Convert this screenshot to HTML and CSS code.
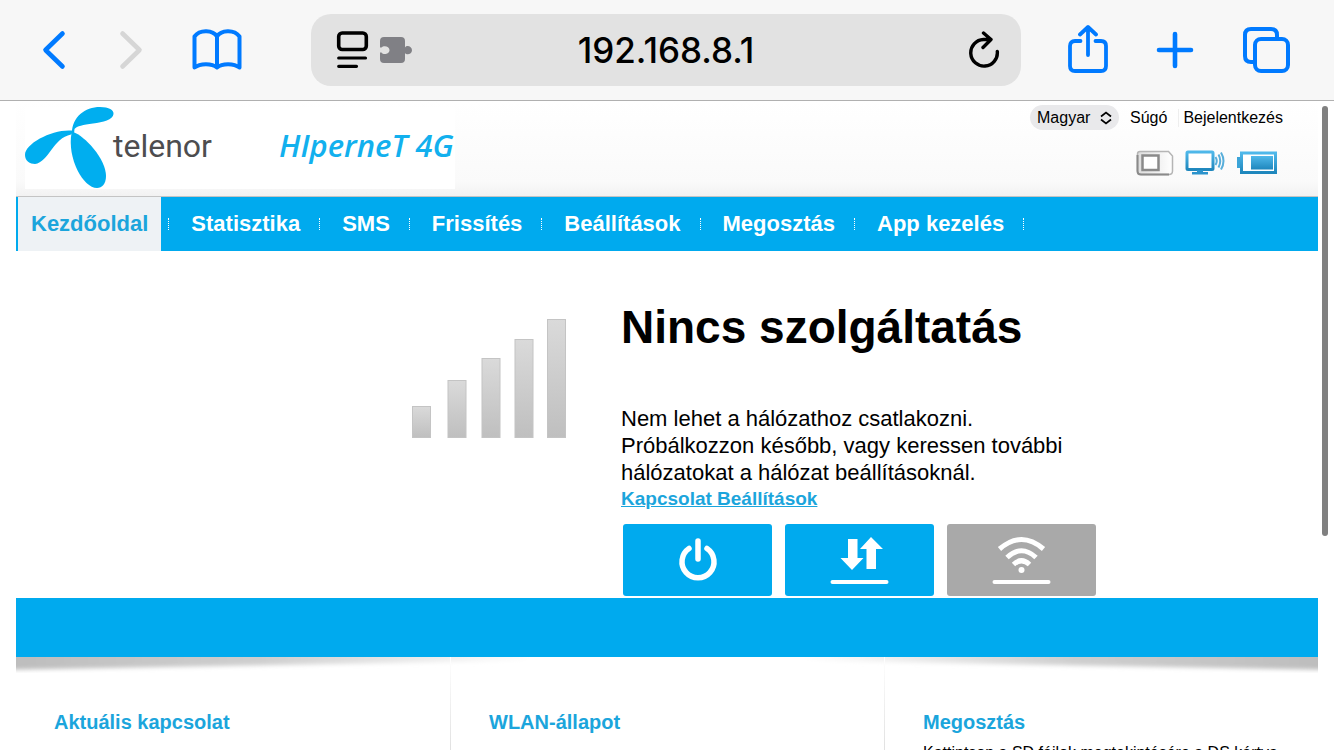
FILE: index.html
```html
<!DOCTYPE html>
<html lang="hu">
<head>
  <meta charset="UTF-8">
  <meta name="viewport" content="width=device-width, initial-scale=1">
  <title>Hipernet 4G</title>
  <link rel="stylesheet" href="styles.css">
</head>
<body>
  <div class="toolbar">
    <div class="tools tools-left">
      <button class="tool" aria-label="Vissza">
        <svg width="24" height="40" viewBox="0 0 24 40"><path d="M20.500 3.500 3.500 20 20.500 36.500" fill="none" stroke="#007aff" stroke-width="4.600" stroke-linecap="round" stroke-linejoin="round"/></svg>
      </button>
      <button class="tool" aria-label="Előre" disabled>
        <svg width="24" height="40" viewBox="0 0 24 40"><path d="M3.500 3.500 20.500 20 3.500 36.500" fill="none" stroke="#d6d6d6" stroke-width="4.600" stroke-linecap="round" stroke-linejoin="round"/></svg>
      </button>
      <button class="tool" aria-label="Könyvjelzők">
        <svg width="50" height="42" viewBox="0 0 50 42"><path d="M25 7.500C21 1 8 0 2.500 7.500V38.500C8 34 20 34 25 38.500C30 34 42 34 47.500 38.500V7.500C42 0 29 1 25 7.500V38.500" fill="none" stroke="#007aff" stroke-width="4" stroke-linecap="round" stroke-linejoin="round"/></svg>
      </button>
    </div>
    <div class="address">
      <button class="tool page-menu" aria-label="Oldalmenü">
        <svg width="76" height="38" viewBox="0 0 76 38">
          <rect x="2.700" y="2" width="27.600" height="16.500" rx="3.500" fill="none" stroke="#000" stroke-width="3.600"/>
          <path d="M2.700 27H29.500M2.700 35.300H20.500" stroke="#000" stroke-width="3.200" stroke-linecap="round"/>
          <path d="M48 6h17a4 4 0 0 1 4 4v6.500c2-3 7-1 7 2.700s-5 5.700-7 2.700V28a4 4 0 0 1-4 4H48a4 4 0 0 1-4-4v-6.500h1.500c2 3 8 1.500 8-2.500s-6-5-8-2.500H44V10a4 4 0 0 1 4-4z" fill="#808085"/>
        </svg>
      </button>
      <span class="url">192.168.8.1</span>
      <button class="tool" aria-label="Frissítés">
        <svg width="32" height="38" viewBox="0 0 32 38"><path d="M14.500 8.500A13.300 13.300 0 1 0 28.300 20.500M14.500 2 22 8.500 14 16.500M22 8.500H14.500" fill="none" stroke="#000" stroke-width="3.400" stroke-linecap="round" stroke-linejoin="round"/></svg>
      </button>
    </div>
    <div class="tools tools-right">
      <button class="tool" aria-label="Megosztás">
        <svg width="40" height="50" viewBox="0 0 40 50"><path d="M12.500 16H7Q2 16 2 21V41Q2 46 7 46H33Q38 46 38 41V21Q38 16 33 16H27.500M20 30V2.500M12 9.500 20 2 28 9.500" fill="none" stroke="#007aff" stroke-width="3.800" stroke-linecap="round" stroke-linejoin="round"/></svg>
      </button>
      <button class="tool" aria-label="Új lap">
        <svg width="38" height="38" viewBox="0 0 38 38"><path d="M19 3V35M3 19H35" stroke="#007aff" stroke-width="4.600" stroke-linecap="round"/></svg>
      </button>
      <button class="tool" aria-label="Lapok">
        <svg width="48" height="48" viewBox="0 0 48 48"><path d="M11 36H9Q3 36 3 30V9Q3 3 9 3H29Q35 3 35 9V12" fill="none" stroke="#007aff" stroke-width="4"/><rect x="13" y="13" width="33" height="32" rx="6" fill="none" stroke="#007aff" stroke-width="4"/></svg>
      </button>
    </div>
  </div>

  <div class="page">
    <header class="header">
      <a class="brand" href="#" aria-label="Telenor Hipernet 4G">
        <svg width="430" height="82" viewBox="0 0 430 82">
          <g fill="#00aeef">
            <path d="M47 26C47 10 60 0 75 0C84 0 89 3 88.500 7C88 13 78 15 68 16.500C58 18 52 19 49.500 22L49 27Z"/>
            <path d="M49 24C30 21 0 36 0 48C0 54 5 57 10 57C24 55 28 31 46 27.500Z"/>
            <path d="M48 25C60 29 81 52 81 69C81 77 77 81 72 81C58 81 42 51 46.500 26Z"/>
          </g>
          <text class="logo-telenor" x="88" y="50">telenor</text>
          <text class="logo-hipernet" x="254" y="50">HIperneT 4G</text>
        </svg>
      </a>
      <div class="header-side">
        <div class="top-links">
          <span class="lang">
            <select aria-label="Nyelv"><option>Magyar</option><option>English</option></select>
            <svg width="12" height="14" viewBox="0 0 12 14"><path d="M1 5.500 6 1.500 11 5.500M1 8.500 6 12.500 11 8.500" fill="none" stroke="#000" stroke-width="1.700"/></svg>
          </span>
          <a href="#">Súgó</a>
          <a class="login" href="#">Bejelentkezés</a>
        </div>
        <div class="status">
          <svg width="38" height="26" viewBox="0 0 38 26">
            <defs>
              <linearGradient id="sim" x1="0" y1="0" x2="1" y2="0"><stop offset="0" stop-color="#ddd"/><stop offset="1" stop-color="#fff"/></linearGradient>
            </defs>
            <path d="M4 1.500H32.500L36.500 6V21Q36.500 24.500 33 24.500H5Q1.500 24.500 1.500 21V4Q1.500 1.500 4 1.500Z" fill="url(#sim)" stroke="#b5b5b5" stroke-width="1.500"/>
            <path d="M1.500 5V21Q1.500 24.500 5 24.500H33" fill="none" stroke="#8a8a8a" stroke-width="2"/>
            <rect x="6.500" y="5.500" width="16" height="14.500" fill="#fff" stroke="#8a8a8a" stroke-width="2.500"/>
          </svg>
          <svg width="40" height="26" viewBox="0 0 40 26">
            <defs>
              <linearGradient id="blue" x1="0" y1="0" x2="0" y2="1"><stop offset="0" stop-color="#4fb8ea"/><stop offset="1" stop-color="#1f87bd"/></linearGradient>
            </defs>
            <rect x="2" y="2" width="26" height="17.500" rx="1" fill="#fff" stroke="url(#blue)" stroke-width="3"/>
            <path d="M12 20h6v2h5v2.500H7V22h5z" fill="#2b93cc"/>
            <path d="M30.500 7Q33 11 30.500 15M33.500 4.500Q37 11 33.500 17.500M36 2.500Q41 11 36 19.500" fill="none" stroke="#58aeda" stroke-width="2"/>
          </svg>
          <svg width="42" height="24" viewBox="0 0 42 24">
            <path d="M1 6h5v11H1z" fill="#3ba4d8"/>
            <rect x="5.500" y="2" width="34" height="19.500" fill="#fff" stroke="url(#blue)" stroke-width="3"/>
            <rect x="15" y="5" width="22" height="13.500" fill="url(#blue)"/>
          </svg>
        </div>
      </div>
    </header>

    <nav class="menu">
      <a class="active" href="#">Kezdőoldal</a>
      <a href="#">Statisztika</a>
      <a href="#">SMS</a>
      <a href="#">Frissítés</a>
      <a href="#">Beállítások</a>
      <a href="#">Megosztás</a>
      <a href="#">App kezelés</a>
    </nav>

    <main class="main">
      <svg class="signal" width="156" height="120" viewBox="0 0 156 120">
        <defs>
          <linearGradient id="bar" x1="0" y1="0" x2="0" y2="1"><stop offset="0" stop-color="#dadada"/><stop offset="1" stop-color="#bfbfbf"/></linearGradient>
        </defs>
        <g fill="url(#bar)" stroke="#c4c4c4">
          <rect x="1.500" y="87.500" width="18" height="31"/>
          <rect x="37" y="61.500" width="18" height="57"/>
          <rect x="71" y="39.500" width="18" height="79"/>
          <rect x="104" y="20.500" width="18" height="98"/>
          <rect x="136.500" y="0.500" width="18" height="118"/>
        </g>
      </svg>
      <section class="service">
        <h1>Nincs szolgáltatás</h1>
        <p>Nem lehet a hálózathoz csatlakozni.<br>Próbálkozzon később, vagy keressen további<br>hálózatokat a hálózat beállításoknál.</p>
        <a class="settings" href="#">Kapcsolat Beállítások</a>
        <div class="actions">
          <button aria-label="Kapcsolat">
            <svg width="60" height="50" viewBox="0 0 60 50"><path d="M21 13.500A16 16 0 1 0 39 13.500M30 6V24" fill="none" stroke="#fff" stroke-width="5.500" stroke-linecap="round"/></svg>
          </button>
          <button aria-label="Adatforgalom">
            <svg width="60" height="50" viewBox="0 0 60 50"><path d="M18 4h9.500v19h6L22 35 10.500 23H18zM36.500 34V14h-6.500L41 2 53 14h-7v20z" fill="#fff"/><path d="M2.500 47H56.500" stroke="#fff" stroke-width="4" stroke-linecap="round"/></svg>
          </button>
          <button class="off" aria-label="WLAN">
            <svg width="60" height="50" viewBox="0 0 60 50"><path d="M7.500 14Q29.500-5 51.500 14M15 22.500Q29.500 9 44 22.500M21.500 29.500Q29.500 22 37.500 29.500" fill="none" stroke="#fff" stroke-width="5"/><circle cx="29.500" cy="35" r="3" fill="#fff"/><path d="M2.500 47H56.500" stroke="#fff" stroke-width="4" stroke-linecap="round"/></svg>
          </button>
        </div>
      </section>
    </main>

    <div class="band"></div>
    <svg class="shade" viewBox="0 0 1302 16" preserveAspectRatio="none">
      <defs>
        <linearGradient id="fade" x1="0" y1="0" x2="1" y2="0"><stop offset="0" stop-color="#bcbcbc"/><stop offset="0.200" stop-color="#cfcfcf"/><stop offset="0.400" stop-color="#fff"/><stop offset="0.600" stop-color="#fff"/><stop offset="0.800" stop-color="#cfcfcf"/><stop offset="1" stop-color="#bcbcbc"/></linearGradient>
        <filter id="soft" x="0" y="0" width="1" height="1.500"><feGaussianBlur stdDeviation="2"/></filter>
      </defs>
      <path d="M-20-10H1322V13L651 1-20 13Z" fill="url(#fade)" filter="url(#soft)"/>
    </svg>

    <div class="columns">
      <section>
        <h2>Aktuális kapcsolat</h2>
      </section>
      <section>
        <h2>WLAN-állapot</h2>
      </section>
      <section>
        <h2>Megosztás</h2>
        <p>Kattintson a SD fájlok megtekintésére a DS kártya</p>
      </section>
    </div>
    <div class="scrollbar"></div>
  </div>
</body>
</html>
```
FILE: styles.css
```css
* {
  box-sizing: border-box;
}

body {
  margin: 0;
  height: 100vh;
  display: flex;
  flex-direction: column;
  overflow: hidden;
  font-family: "Liberation Sans", Arial, sans-serif;
  background: #fff;
  color: #000;
}

a {
  color: inherit;
  text-decoration: none;
}

button {
  border: none;
  padding: 0;
  background: none;
  cursor: pointer;
}

svg {
  display: block;
}

.toolbar {
  display: grid;
  grid-template-columns: 1fr 710px 1fr;
  align-items: center;
  flex: none;
  padding: 14px 44px 14px 42px;
  background: #f7f7f7;
  border-bottom: 1px solid #b0b0b0;
}

.tools {
  display: flex;
  align-items: center;
}

.tools-left {
  gap: 53px;
}

.tools-left .tool:last-child {
  margin-left: -4px;
}

.tools-right {
  gap: 48px;
  justify-content: flex-end;
}

.address {
  display: grid;
  grid-template-columns: 1fr auto 1fr;
  align-items: center;
  height: 72px;
  padding: 0 20px;
  border-radius: 20px;
  background: #e2e2e2;
}

.address .tool:last-child {
  justify-self: end;
}

.page-menu {
  justify-self: start;
  padding-left: 5px;
}

.url {
  font-family: Inter, sans-serif;
  font-size: 35px;
  font-weight: 500;
  line-height: 42px;
}

.page {
  position: relative;
  flex: 1;
  min-height: 0;
  overflow: hidden;
  padding: 0 16px;
}

.header {
  display: flex;
  justify-content: space-between;
  height: 96px;
  padding: 4px 35px 0 9px;
  background: linear-gradient(#fff, #fafafa 85%, #f2f2f2);
  border-bottom: 1px solid #c4c4c4;
}

.brand {
  align-self: flex-start;
  margin-top: 2px;
  background: #fff;
}

.logo-telenor {
  font: 32px Roboto, sans-serif;
  fill: #4d4d4f;
}

.logo-hipernet {
  font: italic 600 31px "Open Sans", sans-serif;
  fill: #12b0ee;
}

.top-links {
  display: flex;
  align-items: center;
  gap: 11px;
  font-size: 16px;
}

.lang {
  display: flex;
  align-items: center;
  height: 25px;
  padding: 0 7px;
  border-radius: 13px;
  background: #e9e9eb;
}

.lang select {
  appearance: none;
  border: none;
  padding: 0;
  width: 63px;
  background: none;
  font: inherit;
  color: #000;
}

.login {
  padding-left: 4px;
  border-left: 1px solid #eee;
}

.status {
  display: flex;
  align-items: center;
  justify-content: flex-end;
  gap: 11px;
  padding: 20px 5px 0 0;
}

.menu {
  display: flex;
  height: 54px;
  background: #00aaee;
  border-left: 2px solid #00aaee;
  font-size: 22px;
  font-weight: bold;
  line-height: 54px;
  color: #fff;
}

.menu a {
  display: flex;
  align-items: center;
  padding-left: 22px;
}

.menu a::after {
  content: "";
  height: 12px;
  margin-left: 19px;
  border-left: 1px dotted #fff;
}

.menu .active {
  padding: 0 13px;
  background: #eef2f5;
  color: #1ba5dc;
}

.menu .active::after {
  display: none;
}

.menu .active + a::before {
  content: "";
  height: 12px;
  margin: 0 22px 0 -15px;
  border-left: 1px dotted #fff;
}

.main {
  display: grid;
  grid-template-columns: 551px 1fr;
  column-gap: 54px;
  height: 347px;
}

.signal {
  justify-self: end;
  margin-top: 68px;
}

.service {
  padding-top: 49px;
}

.service h1 {
  margin: 0 0 51px;
  font-size: 46px;
  line-height: 54px;
}

.service p {
  margin: 0;
  font-size: 22px;
  line-height: 27px;
}

.settings {
  display: block;
  font-size: 19px;
  font-weight: bold;
  line-height: 26px;
  color: #1ba5dc;
  text-decoration: underline;
}

.actions {
  display: flex;
  gap: 13px;
  padding: 12px 2px 0;
}

.actions button {
  display: flex;
  justify-content: center;
  align-items: center;
  width: 149px;
  height: 72px;
  border-radius: 3px;
  background: #00aaee;
}

.actions .off {
  background: #a9a9a9;
}

.band {
  height: 59px;
  background: #00aaee;
}

.shade {
  width: 100%;
  height: 16px;
}

.columns {
  display: grid;
  grid-template-columns: repeat(3, 1fr);
  height: 200px;
  margin-top: -16px;
}

.columns section {
  padding: 52px 38px 0;
}

.columns section + section {
  border-left: 1px solid;
  border-image: linear-gradient(#fff, #e2e2e2 90px) 1;
}

.columns h2 {
  margin: 0;
  font-size: 20px;
  line-height: 26px;
  color: #1ba5dc;
}

.columns p {
  margin: 8px 0 0;
  font-size: 16px;
  line-height: 20px;
  white-space: nowrap;
}

.scrollbar {
  position: absolute;
  top: 5px;
  right: 6px;
  width: 6px;
  height: 430px;
  border-radius: 3px;
  background: #808080;
}
```
